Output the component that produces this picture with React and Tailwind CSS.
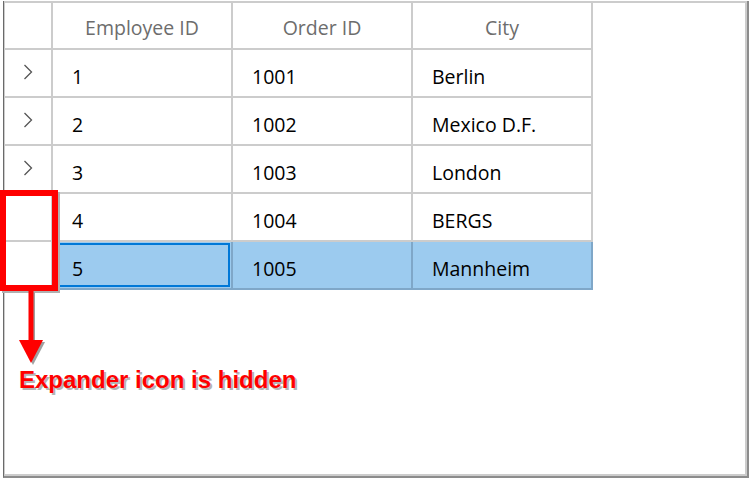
const orders = [
  { employee: '1', order: '1001', city: 'Berlin', expandable: true },
  { employee: '2', order: '1002', city: 'Mexico D.F.', expandable: true },
  { employee: '3', order: '1003', city: 'London', expandable: true },
  { employee: '4', order: '1004', city: 'BERGS', expandable: false },
  { employee: '5', order: '1005', city: 'Mannheim', expandable: false, selected: true },
]

function Chevron() {
  return (
    <svg width="10" height="16" viewBox="0 0 10 16" fill="none" className="-mt-[2px]">
      <path d="M1.5 1 L8.5 8 L1.5 15" stroke="#555" strokeWidth="1.3" />
    </svg>
  )
}

export default function App() {
  return (
    <div className="relative w-[749px] h-[478px] bg-white overflow-hidden" style={{ fontFamily: '"Open Sans", "Noto Sans", sans-serif' }}>
      <div className="absolute left-[3px] top-[1px] w-[746px] h-[477px] border-l border-r-2 border-b-2 border-l-[#6a6a6a] border-r-[#8c8c8c] border-b-[#8c8c8c]">
        <div className="h-full border-t-2 border-l border-r-2 border-b-2 border-[#cccccc]">
          <div className="grid grid-cols-[48px_180px_180px_180px] text-[19.5px]">
            <div className="h-[47px] border-r-2 border-b-2 border-[#cccccc]" />
            {['Employee ID', 'Order ID', 'City'].map((h) => (
              <div key={h} className="h-[47px] pt-[4px] flex items-center justify-center text-[#6d6d6d] border-r-2 border-b-2 border-[#cccccc]">
                {h}
              </div>
            ))}

            {orders.map((r) => (
              <Row key={r.order} r={r} />
            ))}
          </div>
        </div>
      </div>

      {/* annotation */}
      <div className="absolute left-0 top-[190px] w-[58px] h-[101px] border-[6px] border-[#ff0000] shadow-[2px_2px_0_#b0b0b0]" />
      <svg className="absolute left-0 top-[291px]" width="60" height="80" viewBox="0 0 60 80">
        <rect x="30" y="1" width="5" height="50" fill="#a0a0a0" />
        <polygon points="21,51 45,51 33,74" fill="#a0a0a0" />
        <rect x="28.5" y="0" width="5" height="50" fill="#ff0000" />
        <polygon points="19,49 43,49 31,72" fill="#ff0000" />
      </svg>
      <div
        className="absolute left-[19px] top-[362px] text-[24px] font-bold text-[#ff0000] [text-shadow:2px_2px_0_#b5b5b5]"
        style={{ fontFamily: '"Liberation Sans", Arial, sans-serif' }}
      >
        Expander icon is hidden
      </div>
    </div>
  )
}

function Row({ r }) {
  const line = r.selected ? 'border-[#7fa7c8]' : 'border-[#cccccc]'
  return (
    <>
      <div className="h-[48px] flex items-center justify-center border-r-2 border-b-2 border-[#cccccc]">
        {r.expandable && <Chevron />}
      </div>
      <div className={`h-[48px] border-r-2 border-b-2 ${line} ${r.selected ? 'bg-[#9ccbef] p-[1px]' : ''}`}>
        <div className={`h-full pt-[7px] flex items-center ${r.selected ? 'border-2 border-[#0078d7] pl-[16px]' : 'pl-[19px]'}`}>
          {r.employee}
        </div>
      </div>
      <div className={`h-[48px] pt-[7px] flex items-center pl-[19px] border-r-2 border-b-2 ${line} ${r.selected ? 'bg-[#9ccbef]' : ''}`}>
        {r.order}
      </div>
      <div className={`h-[48px] pt-[7px] flex items-center pl-[19px] border-r-2 border-b-2 ${line} ${r.selected ? 'bg-[#9ccbef]' : ''}`}>
        {r.city}
      </div>
    </>
  )
}
